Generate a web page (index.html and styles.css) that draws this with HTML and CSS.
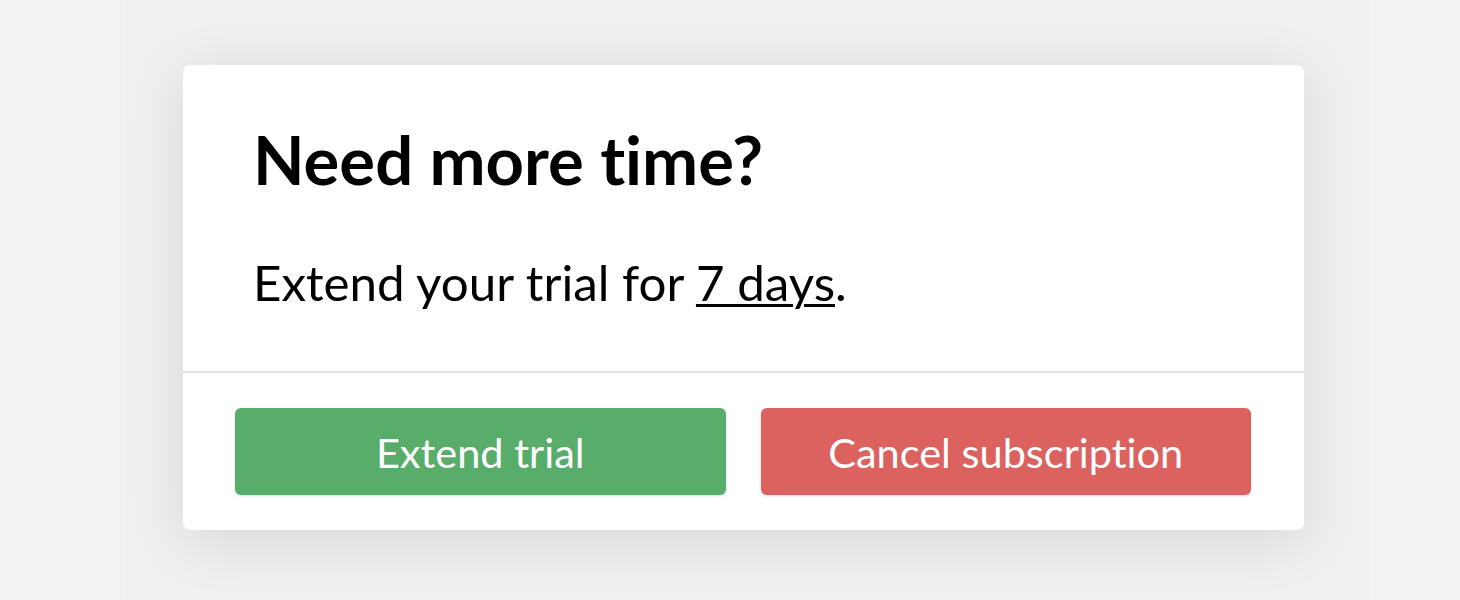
FILE: index.html
```html
<!DOCTYPE html>
<html>
<head>
<meta charset="utf-8">
<link rel="stylesheet" href="styles.css">
</head>
<body>
<div class="stage">
  <div class="card">
    <div class="card-body">
      <h1 class="title">Need more time?</h1>
      <p class="text">Extend your trial for <span class="link">7 days</span>.</p>
    </div>
    <div class="card-footer">
      <button class="btn btn-green">Extend trial</button>
      <button class="btn btn-red">Cancel subscription</button>
    </div>
  </div>
</div>
</body>
</html>
```
FILE: styles.css
```css
html, body {
  margin: 0;
  padding: 0;
  background: #f2f2f2;
  font-family: Lato, "Noto Sans", sans-serif;
  font-variant-ligatures: none;
}
.stage {
  height: 600px;
  width: 1245px;
  margin-left: 125px;
  background: #f0f0f0;
  padding-top: 65px;
  padding-left: 58px;
  box-sizing: border-box;
}
.card {
  width: 1121px;
  height: 465px;
  background: #ffffff;
  border-radius: 7px;
  box-shadow: 0 10px 60px rgba(0, 0, 0, 0.10);
  display: flex;
  flex-direction: column;
  box-sizing: border-box;
}
.card-body {
  padding: 0 52px 0 70px;
  height: 308px;
  border-bottom: 2px solid #e2e2e2;
  box-sizing: border-box;
}
.title {
  margin: 0;
  padding-top: 55px;
  font-size: 67px;
  line-height: 78px;
  font-weight: 700;
  color: #000;
}
.text {
  margin: 54px 0 0;
  font-size: 49.3px;
  line-height: 60px;
  color: #000;
}
.link {
  text-decoration: underline;
  text-decoration-thickness: 3px;
  text-underline-offset: 3px;
}
.card-footer {
  display: flex;
  gap: 35px;
  padding: 35px 53px 0 52px;
}
.btn {
  flex: 1;
  height: 87px;
  border: none;
  border-radius: 6px;
  color: #fff;
  font-family: Lato, "Noto Sans", sans-serif;
  font-variant-ligatures: none;
  font-size: 41.5px;
  padding: 0;
  box-shadow: 0 1px 3px rgba(0, 0, 0, 0.15);
}
.btn-green { background: #59ad6b; }
.btn-red { background: #db625e; }
```
